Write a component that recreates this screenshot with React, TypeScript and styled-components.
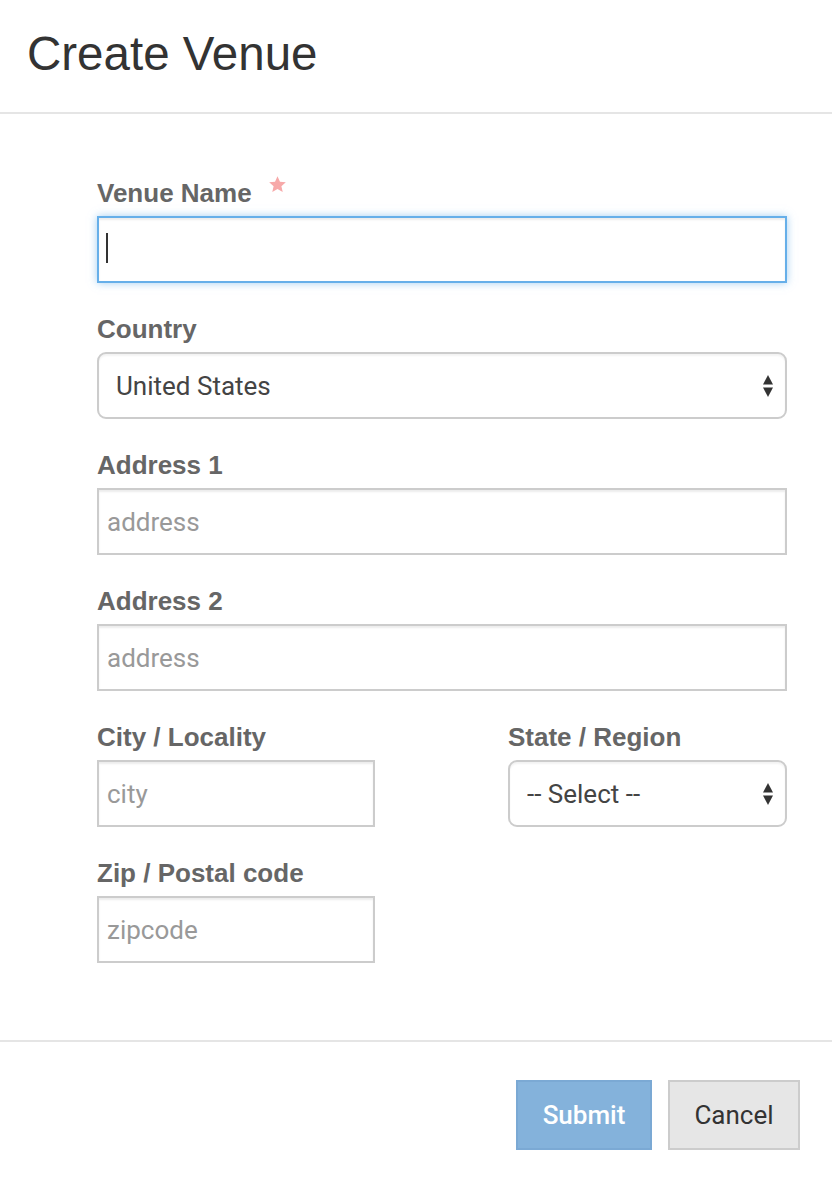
import React from 'react'
import styled, { createGlobalStyle } from 'styled-components'

const GlobalStyle = createGlobalStyle`
  html, body {
    margin: 0;
    padding: 0;
    background: #fff;
  }
  * {
    box-sizing: border-box;
  }
`

const Modal = styled.div`
  width: 832px;
  min-height: 1186px;
  background: #fff;
  font-family: "Liberation Sans", Arial, sans-serif;
`

const Header = styled.div`
  padding: 31px 27px 35px;
  border-bottom: 2px solid #e5e5e5;
`

const Title = styled.h1`
  margin: 0;
  font-size: 47.5px;
  line-height: 46px;
  font-weight: 400;
  color: #333;
`

const Form = styled.form`
  display: flex;
  flex-direction: column;
  gap: 33px;
  padding: 66px 45px 77px 97px;
`

const Group = styled.div`
  display: flex;
  flex-direction: column;
`

const Row = styled.div`
  display: grid;
  grid-template-columns: 278px 279px;
  justify-content: space-between;
`

const Label = styled.label<{ $gap?: number }>`
  display: flex;
  align-items: flex-start;
  height: 26px;
  margin-bottom: ${p => p.$gap ?? 10}px;
  font-size: 26px;
  line-height: 26px;
  font-weight: 700;
  color: #666;
`

const Star = styled.svg`
  width: 19px;
  height: 19px;
  margin: -5px 0 0 16px;
`

const Field = styled.div`
  position: relative;
`

const TextInput = styled.input<{ $focused?: boolean }>`
  display: block;
  width: 100%;
  height: 67px;
  padding: 0 8px;
  border: 2px solid ${p => (p.$focused ? '#66afe9' : '#cccccc')};
  border-radius: 0;
  background: #fff;
  box-shadow: ${p =>
    p.$focused
      ? 'inset 0 2px 2px rgba(0,0,0,.075), 0 0 8px rgba(102,175,233,.6)'
      : 'inset 0 2px 2px rgba(0,0,0,.075)'};
  font-family: Roboto, "Liberation Sans", sans-serif;
  font-size: 26px;
  color: #555;
  outline: none;
  &::placeholder {
    color: #999;
  }
`

const Caret = styled.span`
  position: absolute;
  left: 9px;
  top: 17px;
  width: 2px;
  height: 30px;
  background: #333;
`

const Select = styled.select`
  display: block;
  width: 100%;
  height: 67px;
  padding: 0 40px 0 17px;
  border: 2px solid #cccccc;
  border-radius: 9px;
  background: #fff;
  appearance: none;
  -webkit-appearance: none;
  box-shadow: inset 0 2px 2px rgba(0,0,0,.05);
  font-family: Roboto, "Liberation Sans", sans-serif;
  font-size: 26px;
  color: #444;
  outline: none;
`

const Arrows = styled.svg`
  position: absolute;
  right: 13px;
  top: 21px;
  width: 12px;
  height: 25px;
  pointer-events: none;
`

const Footer = styled.div`
  display: flex;
  justify-content: flex-end;
  gap: 16px;
  padding: 38px 32px 36px;
  border-top: 2px solid #e5e5e5;
`

const Button = styled.button<{ $primary?: boolean; $width: number }>`
  width: ${p => p.$width}px;
  height: 70px;
  padding: 0;
  border: 2px solid ${p => (p.$primary ? '#7ba9d4' : '#cccccc')};
  border-radius: 0;
  background: ${p => (p.$primary ? '#84b2db' : '#e6e6e6')};
  color: ${p => (p.$primary ? '#fff' : '#333')};
  font-family: Roboto, "Liberation Sans", sans-serif;
  font-size: 26px;
  font-weight: ${p => (p.$primary ? 500 : 400)};
`

const StarIcon = () => (
  <Star viewBox="0 0 24 24">
    <path
      d="M12 1.5l3.1 6.9 7.4.7-5.6 5 1.7 7.4L12 17.6l-6.6 3.9 1.7-7.4-5.6-5 7.4-.7z"
      fill="#f7a9a9"
    />
  </Star>
)

const SelectArrows = () => (
  <Arrows viewBox="0 0 12 25">
    <path d="M1 11.5L6 2l5 9.5z" fill="#333" />
    <path d="M1 14.5L6 24l5-9.5z" fill="#333" />
  </Arrows>
)

const SelectField: React.FC<{ value: string }> = ({ value }) => (
  <Field>
    <Select defaultValue={value}>
      <option>{value}</option>
    </Select>
    <SelectArrows />
  </Field>
)

const App: React.FC = () => {
  return (
    <>
      <GlobalStyle />
      <Modal>
        <Header>
          <Title>Create Venue</Title>
        </Header>

        <Form onSubmit={e => e.preventDefault()}>
          <Group>
            <Label>
              Venue Name
              <StarIcon />
            </Label>
            <Field>
              <TextInput $focused readOnly />
              <Caret />
            </Field>
          </Group>

          <Group>
            <Label>Country</Label>
            <SelectField value="United States" />
          </Group>

          <Group>
            <Label>Address 1</Label>
            <TextInput placeholder="address" />
          </Group>

          <Group>
            <Label>Address 2</Label>
            <TextInput placeholder="address" />
          </Group>

          <Row>
            <Group>
              <Label>City / Locality</Label>
              <TextInput placeholder="city" />
            </Group>
            <Group>
              <Label>State / Region</Label>
              <SelectField value="-- Select --" />
            </Group>
          </Row>

          <Row>
            <Group>
              <Label>Zip / Postal code</Label>
              <TextInput placeholder="zipcode" />
            </Group>
          </Row>
        </Form>

        <Footer>
          <Button $primary $width={136}>Submit</Button>
          <Button $width={132}>Cancel</Button>
        </Footer>
      </Modal>
    </>
  )
}

export default App
